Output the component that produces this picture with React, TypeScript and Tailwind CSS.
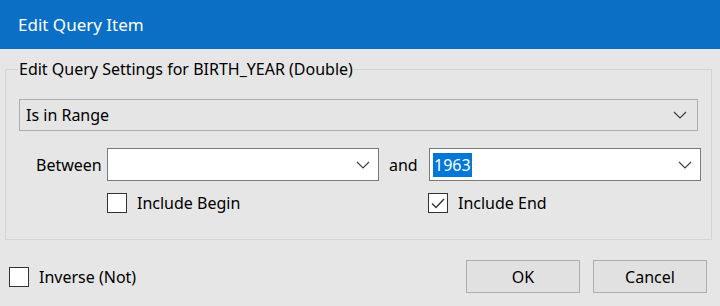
const font = { fontFamily: '"Noto Sans", "Liberation Sans", sans-serif' };

const Chevron = () => (
  <svg width="14" height="8" viewBox="0 0 14 8" className="shrink-0">
    <path d="M1 1 L7 7 L13 1" fill="none" stroke="#404040" strokeWidth="1.2" />
  </svg>
);

const Check = ({ checked, label }: { checked?: boolean; label: string }) => (
  <label className="flex items-center gap-[10px]">
    <span className="w-5 h-5 border border-[#333] bg-white flex items-center justify-center">
      {checked && (
        <svg width="14" height="11" viewBox="0 0 14 11">
          <path d="M1 5.5 L5 9.5 L13 1" fill="none" stroke="#333" strokeWidth="1.4" />
        </svg>
      )}
    </span>
    <span className="text-[16px] text-black leading-none">{label}</span>
  </label>
);

export default function App() {
  return (
    <div style={font} className="w-[720px] h-[306px] bg-[#e6e6e6] flex flex-col overflow-hidden">
      <div className="h-[49px] bg-[#0b70c5] flex items-center pl-[18px] text-white text-[17px]">
        Edit Query Item
      </div>

      <fieldset className="mt-[8px] ml-[5px] mr-[8px] h-[183px] border border-[#d4d4d4] px-[13px] pt-0">
        <legend className="text-[16px] text-black px-[1px] -ml-[1px]">
          Edit Query Settings for BIRTH_YEAR (Double)
        </legend>

        <div className="mt-[18px] h-[32px] border border-[#adadad] bg-[#e5e5e5] flex items-center justify-between pl-[6px] pr-[10px]">
          <span className="text-[16px] text-black">Is in Range</span>
          <Chevron />
        </div>

        <div className="mt-[17px] flex items-center">
          <span className="ml-[17px] w-[71px] text-[16px] text-black">Between</span>
          <div className="w-[272px] h-[33px] border border-[#7a7a7a] bg-white flex items-center justify-end pr-[8px]">
            <Chevron />
          </div>
          <span className="ml-[10px] w-[40px] text-[16px] text-black">and</span>
          <div className="flex-1 h-[33px] border border-[#7a7a7a] bg-white flex items-center justify-between pl-[3px] pr-[8px] -mr-[3px]">
            <span className="bg-[#0078d7] text-white text-[16px] leading-[24px] px-[1px]">1963</span>
            <Chevron />
          </div>
        </div>

        <div className="mt-[12px] flex">
          <div className="ml-[88px] w-[321px]">
            <Check label="Include Begin" />
          </div>
          <Check checked label="Include End" />
        </div>
      </fieldset>

      <div className="mt-[20px] flex items-center pl-[9px] pr-[13px]">
        <Check label="Inverse (Not)" />
        <div className="ml-auto flex gap-[13px]">
          <button className="w-[114px] h-[33px] border border-[#adadad] bg-[#e1e1e1] text-[16px] text-black">
            OK
          </button>
          <button className="w-[114px] h-[33px] border border-[#adadad] bg-[#e1e1e1] text-[16px] text-black">
            Cancel
          </button>
        </div>
      </div>
    </div>
  );
}
